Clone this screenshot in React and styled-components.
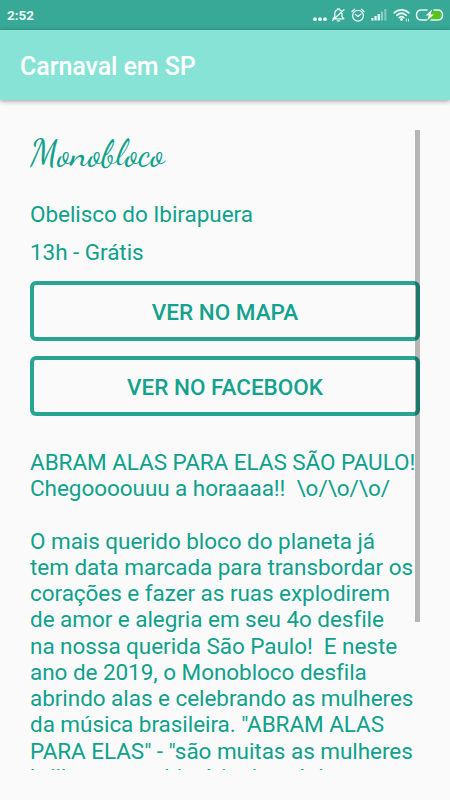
import styled, { createGlobalStyle } from "styled-components";

const GlobalStyle = createGlobalStyle`
    * {
        box-sizing: border-box;
    }
    body {
        margin: 0;
        background: #fafafa;
        font-family: Roboto, "Liberation Sans", sans-serif;
        color: #0fa18c;
    }
`

const Screen = styled.div`
    width: 450px;
    height: 800px;
    display: flex;
    flex-direction: column;
    overflow: hidden;
`

const StatusBar = styled.div`
    height: 30px;
    flex: none;
    display: flex;
    align-items: center;
    justify-content: space-between;
    padding: 0 6px 0 7px;
    background: #38a897;
    color: #e6f7f3;
`

const Clock = styled.span`
    font-size: 13.5px;
    font-weight: 700;
    line-height: 16px;
`

const Toolbar = styled.header`
    height: 70px;
    flex: none;
    display: flex;
    align-items: center;
    padding: 2px 20px 0;
    background: #87e3d5;
    box-shadow: 0 1px 5px rgba(0, 0, 0, 0.4);
`

const Title = styled.h1`
    margin: 0;
    font-size: 25px;
    font-weight: 500;
    letter-spacing: -0.07px;
    color: #fff;
`

const Scroller = styled.main`
    position: relative;
    height: 640px;
    margin: 30px 30px 0;
    overflow: hidden;
`

const Scrollbar = styled.div`
    position: absolute;
    top: 0;
    right: 0;
    width: 5px;
    height: 492px;
    background: rgba(0, 0, 0, 0.27);
`

const BlockName = styled.h2`
    margin: 0;
    height: 71px;
    font-family: "Dancing Script", "Liberation Serif", cursive;
    font-size: 37.2px;
    font-weight: 400;
    line-height: 46px;
`

const Info = styled.p`
    margin: 0 0 12px;
    font-size: 22.5px;
    line-height: 26px;
    letter-spacing: -0.05px;
`

const Actions = styled.div`
    display: flex;
    flex-direction: column;
    gap: 15px;
    padding-top: 4px;
`

const Action = styled.button`
    height: 60px;
    padding: 2px 0 0;
    border: 4px solid #25a592;
    border-radius: 6px;
    background: transparent;
    color: #14a28e;
    font-family: inherit;
    font-size: 22.5px;
    font-weight: 500;
`

const Description = styled.p`
    margin: 32.8px 0 0;
    font-size: 22.5px;
    line-height: 26.27px;
    letter-spacing: -0.05px;
    white-space: pre;
`

const description = `ABRAM ALAS PARA ELAS SÃO PAULO!
Chegoooouuu a horaaaa!!  \\o/\\o/\\o/

O mais querido bloco do planeta já
tem data marcada para transbordar os
corações e fazer as ruas explodirem
de amor e alegria em seu 4o desfile
na nossa querida São Paulo!  E neste
ano de 2019, o Monobloco desfila
abrindo alas e celebrando as mulheres
da música brasileira. "ABRAM ALAS
PARA ELAS" - "são muitas as mulheres
brilhantes na história da música`;

const StatusIcons = () => (
    <svg width="132" height="20" viewBox="312 5 132 20" fill="none" stroke="#e6f7f3" strokeWidth="1.3" strokeLinecap="round" strokeLinejoin="round">
        <g fill="#e6f7f3" stroke="none">
            <circle cx="315" cy="19.2" r="1.9" />
            <circle cx="320" cy="19.2" r="1.9" />
            <circle cx="325" cy="19.2" r="1.9" />
        </g>
        <path d="M333 18.8h10.8l-1.8-2v-3.2c0-2.1-1-3.4-2.7-3.9v-.9h-1.8v.9c-1.7.5-2.7 1.8-2.7 3.9v3.2z M337.2 20.8h2.4 M332.5 20.5L344 9.7" />
        <circle cx="358" cy="15.7" r="5.4" />
        <path d="M355.5 14.5l2.5 2 3-2.5 M352 11.5l2.6-2.2 M364 11.5l-2.6-2.2" />
        <g stroke="none" fill="#e6f7f3">
            <rect x="371.2" y="18" width="2.3" height="2.5" />
            <rect x="374.4" y="16" width="2.3" height="4.5" />
            <rect x="377.6" y="14" width="2.3" height="6.5" />
            <rect x="380.8" y="11.5" width="2.3" height="9" opacity=".5" />
            <rect x="384.2" y="9" width="2.3" height="11.5" opacity=".4" />
        </g>
        <path d="M394.2 12.8c4.2-4 10.4-4 14.6 0 M396.8 15.3c2.9-2.6 6.5-2.6 9.4 0 M399.2 17.6c1.5-1.3 3.1-1.3 4.6 0" strokeWidth="1.8" />
        <circle cx="401.5" cy="19.5" r="1.4" fill="#e6f7f3" stroke="none" />
        <path d="M406.3 19v2.2 M408.5 19v2.2" strokeWidth=".9" />
        <path d="M433 11h4.2q4.3 0 4.3 4t-4.3 4H429z" fill="#55c51a" stroke="none" />
        <path d="M427 10h-5.5q-5 0-5 5t5 5h5 M434 10h3.5q5 0 5 5t-5 5h-6.5" strokeWidth="1.5" />
        <path d="M432 9.5l-6.5 6h3.3l-1.8 5 7-6h-3.4z" fill="#f3fffa" stroke="none" />
    </svg>
)

const App = () => {
    return (
        <Screen>
            <GlobalStyle />
            <StatusBar>
                <Clock>2:52</Clock>
                <StatusIcons />
            </StatusBar>
            <Toolbar>
                <Title>Carnaval em SP</Title>
            </Toolbar>
            <Scroller>
                <BlockName>Monobloco</BlockName>
                <Info>Obelisco do Ibirapuera</Info>
                <Info>13h - Grátis</Info>
                <Actions>
                    <Action>VER NO MAPA</Action>
                    <Action>VER NO FACEBOOK</Action>
                </Actions>
                <Description>{description}</Description>
                <Scrollbar />
            </Scroller>
        </Screen>
    );
}

export default App;
